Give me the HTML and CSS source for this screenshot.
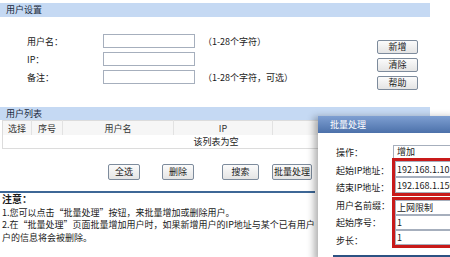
FILE: index.html
```html
<!DOCTYPE html>
<html lang="zh-CN">
<head>
    <meta charset="UTF-8">
    <title>用户设置</title>
    <link rel="stylesheet" href="styles.css">
</head>
<body>
<div class="page">
    <div class="bar bar-top">用户设置</div>
    <div class="setup">
        <div class="fields">
            <div class="row"><label class="lbl" for="uname">用户名：</label><input class="txt" id="uname"><span class="hint">（1-28个字符）</span></div>
            <div class="row"><label class="lbl" for="uip">IP：</label><input class="txt" id="uip"></div>
            <div class="row"><label class="lbl" for="unote">备注：</label><input class="txt" id="unote"><span class="hint">（1-28个字符，可选）</span></div>
        </div>
        <div class="side">
            <button class="btn">新增</button>
            <button class="btn">清除</button>
            <button class="btn">帮助</button>
        </div>
    </div>

    <div class="bar bar-list">用户列表</div>
    <table class="list">
        <tr class="head">
            <th class="c-sel">选择</th>
            <th class="c-no">序号</th>
            <th class="c-name">用户名</th>
            <th class="c-ip">IP</th>
            <th></th>
        </tr>
        <tr class="empty">
            <td colspan="5">该列表为空</td>
        </tr>
    </table>

    <div class="actions">
        <button class="btn b-all">全选</button>
        <button class="btn b-del">删除</button>
        <button class="btn b-find">搜索</button>
        <button class="btn b-batch">批量处理</button>
    </div>

    <div class="notes">
        <b>注意：</b><br>
        1.您可以点击“批量处理”按钮，来批量增加或删除用户。<br>
        2.在“批量处理”页面批量增加用户时，如果新增用户的IP地址与某个已有用户的IP地址相同，则已有用<br>
        户的信息将会被删除。
    </div>
</div>

<div class="dialog">
    <div class="dlg-title">批量处理</div>
    <div class="dlg-body">
        <div class="dlg-labels">
            <div>操作：</div>
            <div>起始IP地址：</div>
            <div>结束IP地址：</div>
            <div>用户名前缀：</div>
            <div>起始序号：</div>
            <div>步长：</div>
        </div>
        <div class="dlg-fields">
            <div class="sel">增加</div>
            <div class="mark mark-ip">
                <input class="dtxt" value="192.168.1.10">
                <input class="dtxt" value="192.168.1.150">
            </div>
            <div class="mark mark-rest">
                <input class="dtxt" value="上网限制">
                <input class="dtxt" value="1">
                <input class="dtxt" value="1">
            </div>
        </div>
    </div>
    <div class="dlg-line"></div>
</div>
</body>
</html>
```

FILE: styles.css
```css
body {
    margin: 0;
    background-color: #ffffff;
    font-family: "Noto Sans CJK SC", "DejaVu Sans", sans-serif;
    font-size: 9px;
    color: #1a1a1a;
    overflow: hidden;
}

.page {
    width: 430px;
    padding-top: 3px;
}

.bar {
    background-color: #c5d9f3;
    padding-left: 6px;
    color: #1c2a3c;
}

.bar-top {
    height: 14px;
    line-height: 14px;
}

.bar-list {
    height: 13px;
    line-height: 13px;
}

/* user settings */
.setup {
    display: flex;
    height: 90px;
}

.fields {
    padding: 12px 0 0 27px;
    flex: 1;
}

.row {
    display: flex;
    align-items: center;
    height: 21px;
    margin-top: -3px;
    padding-top: 3px;
    box-sizing: border-box;
}

.row:first-child {
    margin-top: 0;
}

.lbl {
    width: 76px;
}

.txt {
    width: 92px;
    height: 14px;
    box-sizing: border-box;
    padding: 0 2px;
    border: 1px solid #a6afbd;
    font: inherit;
}

.hint {
    margin-left: 8px;
}

.side {
    display: flex;
    flex-direction: column;
    gap: 4px;
    padding-top: 23px;
    margin-right: 12px;
}

.btn {
    height: 14px;
    width: 41px;
    padding: 0;
    font: inherit;
    line-height: 12px;
    color: #1a1a1a;
    background: linear-gradient(#fbfbfb, #e4e4e4);
    border: 1px solid #7d8b9c;
    border-radius: 2px;
}

/* user list */
.list {
    margin-left: 2px;
    width: 428px;
    border-collapse: collapse;
    border: 1px solid #dcdcdc;
}

.list th {
    height: 14px;
    padding: 0;
    font-weight: normal;
    background-color: #f6f6f6;
    border-left: 1px solid #e2e2e2;
    color: #333333;
}

.list th:first-child {
    border-left: 0;
}

.c-sel {
    width: 28px;
}

.c-no {
    width: 30px;
}

.c-name {
    width: 110px;
}

.c-ip {
    width: 98px;
}

.list td {
    height: 13px;
    padding: 0;
    text-align: center;
    background-color: #ffffff;
}

.actions {
    display: flex;
    padding: 15px 0 0 108px;
    height: 16px;
}

.actions .btn {
    height: 16px;
    width: 32px;
}

.b-del {
    margin-left: 22px;
}

.actions .b-find {
    margin-left: 28px;
    width: 37px;
}

.actions .b-batch {
    margin-left: 13px;
    width: 40px;
}

.notes {
    margin-top: 11px;
    border-top: 2px solid #3d6796;
    padding-left: 2px;
    line-height: 12.5px;
    white-space: nowrap;
    width: 313px;
    overflow: hidden;
}

.notes b {
    font-size: 10px;
}

/* batch dialog */
.dialog {
    position: absolute;
    left: 318px;
    top: 116px;
    width: 140px;
    height: 145px;
    background-color: #ffffff;
    box-shadow: -4px 1px 7px rgba(0, 0, 0, 0.3);
}

.dlg-title {
    height: 17px;
    line-height: 17px;
    padding-left: 12px;
    color: #ffffff;
    background: linear-gradient(#7e9fd2, #4c71aa);
}

.dlg-body {
    display: flex;
    padding-left: 18px;
}

.dlg-labels {
    width: 57px;
    padding-top: 11px;
    line-height: 17.5px;
}

.dlg-fields {
    padding-top: 12px;
    flex: 1;
}

.sel {
    height: 14px;
    line-height: 12px;
    box-sizing: border-box;
    border: 1px solid #a6afbd;
    padding-left: 3px;
}

.mark {
    border: 3px solid #c81a1a;
    margin-left: -1px;
    display: flex;
    flex-direction: column;
}

.mark-ip {
    margin-top: -1px;
}

.mark-ip .dtxt {
    height: 16px;
}

.mark-rest {
    margin-top: 1px;
}

.mark-rest .dtxt {
    height: 15px;
}

.dtxt {
    width: 100%;
    box-sizing: border-box;
    padding: 0 1px;
    border: 1px solid #a6afbd;
    font: inherit;
    color: #1a1a1a;
}

.dlg-line {
    margin: 6px 0 0 15px;
    border-top: 2px solid #2c5283;
}
```
